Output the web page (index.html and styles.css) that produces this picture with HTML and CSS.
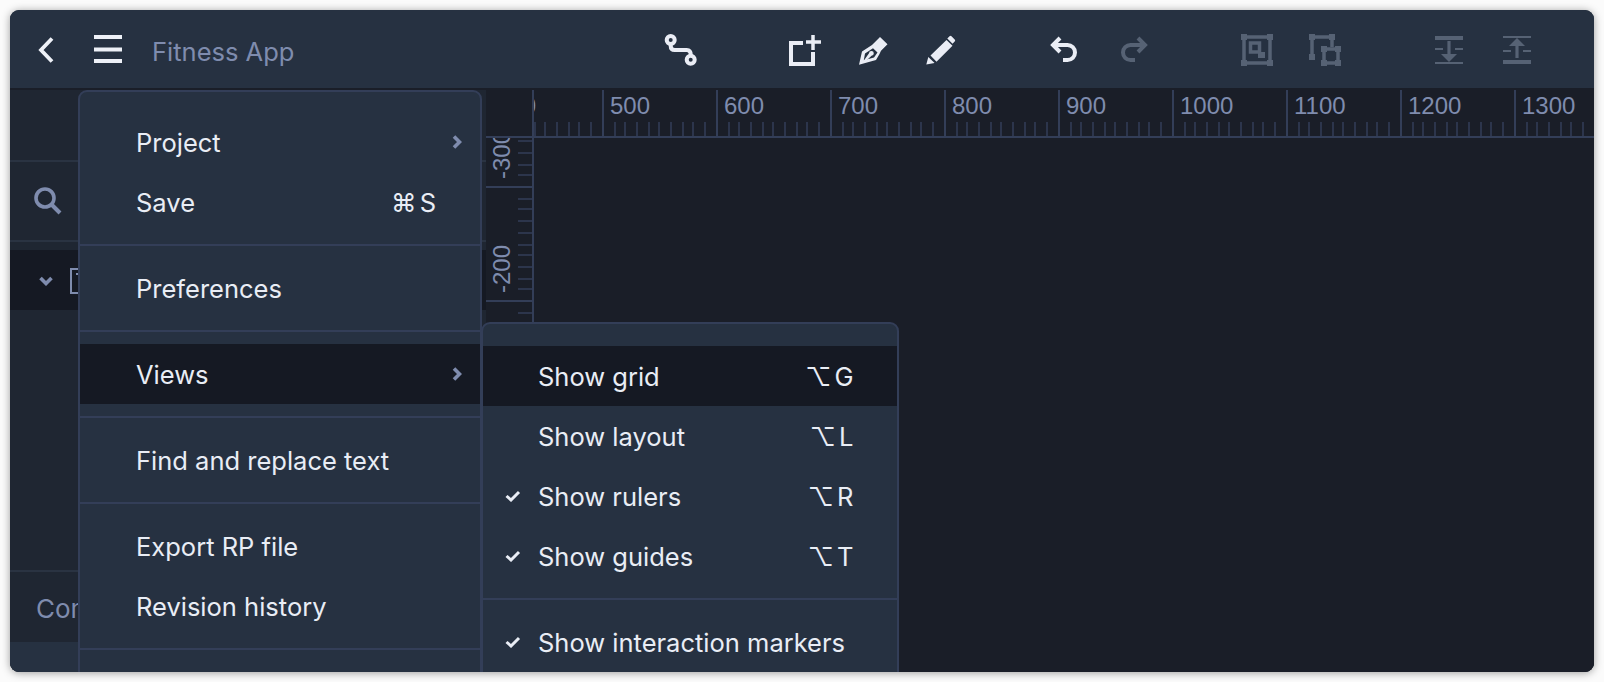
FILE: index.html
```html
<!DOCTYPE html>
<html lang="en">
<head>
<meta charset="utf-8">
<title>Fitness App</title>
<link rel="stylesheet" href="styles.css">
</head>
<body>
<svg class="defs" width="0" height="0" aria-hidden="true">
  <symbol id="ticks-h" viewBox="0 0 112 14"><path d="M11 0v14M21 0v14M33 0v14M45 0v14M55 0v14M67 0v14M79 0v14M89 0v14M101 0v14"/></symbol>
  <symbol id="ticks-v" viewBox="0 0 14 112"><path d="M0 11h14M0 21h14M0 33h14M0 45h14M0 57h14M0 67h14M0 79h14M0 91h14M0 101h14"/></symbol>
</svg>
<div class="window">
  <header class="header">
    <svg class="back" width="16" height="30" viewBox="0 0 16 30"><path d="M14 3.500 3 15l11 11.500"/></svg>
    <svg class="burger" width="28" height="30" viewBox="0 0 28 30"><path d="M0 2h28M0 14.500h28M0 26h28"/></svg>
    <span class="title">Fitness App</span>
    <div class="tools">
      <div class="tool-group">
        <span class="tool"><svg class="ico" width="36" height="36" viewBox="0 0 36 36"><circle cx="7.700" cy="8" r="4"/><circle cx="27.700" cy="27.700" r="4"/><path d="M7.700 12v2q0 4 4 4h12q4.200 0 4.200 5.500"/></svg></span>
      </div>
      <div class="tool-group">
        <span class="tool"><svg class="ico" width="36" height="36" viewBox="0 0 36 36"><path d="M16 11H4v21h22V20"/><path class="thin" d="M19 10h15M26 3v15"/></svg></span>
        <span class="tool"><svg class="ico" width="36" height="36" viewBox="0 0 36 36"><path class="solid" fill-rule="evenodd" d="M4 32.800 7 19.500 17 13l1.500-1.500L25 5l7.500 7.300L26 18.700 24.500 22 21 28ZM8.800 28.300 10 21.500l8-5.200 4.500 4.200-3.500 5Z"/><path class="solid" d="M7.500 30.500 14 21.300a2.400 2.400 0 1 1 2.500 2.500L9 30.800Z"/></svg></span>
        <span class="tool"><svg class="ico" width="36" height="36" viewBox="0 0 36 36"><path class="solid" d="M3.300 32.500 5.300 25l6.300 6ZM7.500 23.500 23.500 8l6 5.800-16 16ZM26.500 4.200q1-1 2 0l3.200 3.200q1 1 0 2l-2.200 2.400-5.200-5.200Z"/></svg></span>
      </div>
      <div class="tool-group">
        <span class="tool"><svg class="ico" width="36" height="36" viewBox="0 0 36 36"><path d="M13 6 6 13l7 7M7 13h13.500a7.500 7.500 0 0 1 0 15H16"/></svg></span>
        <span class="tool off"><svg class="ico" width="36" height="36" viewBox="0 0 36 36"><path d="m23 6 7 7-7 7M29 13H15.500a7.500 7.500 0 0 0 0 15H20"/></svg></span>
      </div>
      <div class="tool-group">
        <span class="tool off"><svg class="ico" width="36" height="36" viewBox="0 0 36 36"><path class="thin3" d="M5 5h26v26H5ZM11.500 11h9v9h-9Z"/><path class="solid" d="M2 2h6v6H2ZM28 2h6v6h-6ZM2 28h6v6H2ZM28 28h6v6h-6ZM19 20h7v6h-7Z"/></svg></span>
        <span class="tool off"><svg class="ico" width="36" height="36" viewBox="0 0 36 36"><path class="thin3" d="M5 25V5h20v10M17 17h14v14H17Z"/><path class="solid" d="M2 2h6v6H2ZM22 2h6v6h-6ZM2 22h6v6H2ZM14 14h6v6h-6ZM28 14h6v6h-6ZM14 28h6v6h-6ZM28 28h6v6h-6Z"/></svg></span>
      </div>
      <div class="tool-group">
        <span class="tool off"><svg class="ico" width="36" height="36" viewBox="0 0 36 36"><path class="solid" d="M4 4h28v4H4ZM4 16h8v2H4ZM24 16h8v2h-8ZM16.400 9h3.200v13H26l-8 8-8-8h6.400ZM4 30h28v2H4Z"/></svg></span>
        <span class="tool off"><svg class="ico" width="36" height="36" viewBox="0 0 36 36"><path class="solid" d="M4 4h28v2H4ZM18 6l8 8h-6.400v12h-3.200V14H10ZM4 18h8v2H4ZM24 18h8v2h-8ZM4 28h28v4H4Z"/></svg></span>
      </div>
    </div>
  </header>

  <div class="body">
    <aside class="sidebar">
      <div class="side-top"></div>
      <div class="side-search">
        <svg class="search" width="30" height="30" viewBox="0 0 30 30"><circle cx="12" cy="12" r="9"/><path d="m19 19 8 8"/></svg>
      </div>
      <div class="side-list">
        <div class="side-row">
          <svg class="caret" width="14" height="10" viewBox="0 0 14 10"><path d="m1.500 2 5.500 5.500L12.500 2"/></svg>
          <svg class="page-ico" width="26" height="26" viewBox="0 0 26 26"><path d="M1 1h24v24H1ZM6 6h8M10 6v6"/></svg>
        </div>
      </div>
      <div class="side-foot"><span class="foot-label">Components</span></div>
      <div class="side-strip"></div>
    </aside>

    <main class="stage">
      <div class="ruler-top">
        <div class="corner"></div>
        <div class="track">
          <div class="hcell"><span class="hlabel">400</span><svg class="hticks"><use href="#ticks-h"/></svg></div>
          <div class="hcell"><span class="hlabel">500</span><svg class="hticks"><use href="#ticks-h"/></svg></div>
          <div class="hcell"><span class="hlabel">600</span><svg class="hticks"><use href="#ticks-h"/></svg></div>
          <div class="hcell"><span class="hlabel">700</span><svg class="hticks"><use href="#ticks-h"/></svg></div>
          <div class="hcell"><span class="hlabel">800</span><svg class="hticks"><use href="#ticks-h"/></svg></div>
          <div class="hcell"><span class="hlabel">900</span><svg class="hticks"><use href="#ticks-h"/></svg></div>
          <div class="hcell"><span class="hlabel">1000</span><svg class="hticks"><use href="#ticks-h"/></svg></div>
          <div class="hcell"><span class="hlabel">1100</span><svg class="hticks"><use href="#ticks-h"/></svg></div>
          <div class="hcell"><span class="hlabel">1200</span><svg class="hticks"><use href="#ticks-h"/></svg></div>
          <div class="hcell"><span class="hlabel">1300</span><svg class="hticks"><use href="#ticks-h"/></svg></div>
        </div>
      </div>
      <div class="stage-main">
        <div class="ruler-left">
          <div class="vcell"><span class="vlabel">-300</span><svg class="vticks"><use href="#ticks-v"/></svg></div>
          <div class="vcell"><span class="vlabel">-200</span><svg class="vticks"><use href="#ticks-v"/></svg></div>
          <div class="vcell"><svg class="vticks"><use href="#ticks-v"/></svg></div>
        </div>
        <div class="canvas"></div>
      </div>
    </main>
  </div>

  <nav class="menu main-menu">
    <div class="section">
      <div class="item"><span class="label">Project</span><svg class="more" width="10" height="14" viewBox="0 0 10 14"><path d="m2 1.500 5.500 5.500L2 12.500"/></svg></div>
      <div class="item"><span class="label">Save</span><span class="key">⌘ S</span></div>
    </div>
    <div class="section">
      <div class="item"><span class="label">Preferences</span></div>
    </div>
    <div class="section">
      <div class="item active"><span class="label">Views</span><svg class="more" width="10" height="14" viewBox="0 0 10 14"><path d="m2 1.500 5.500 5.500L2 12.500"/></svg></div>
    </div>
    <div class="section">
      <div class="item"><span class="label">Find and replace text</span></div>
    </div>
    <div class="section">
      <div class="item"><span class="label">Export RP file</span></div>
      <div class="item"><span class="label">Revision history</span></div>
    </div>
    <div class="section"></div>
  </nav>

  <nav class="menu sub-menu">
    <div class="section">
      <div class="item active"><span class="check"></span><span class="label">Show grid</span><span class="key">⌥ G</span></div>
      <div class="item"><span class="check"></span><span class="label">Show layout</span><span class="key">⌥ L</span></div>
      <div class="item"><svg class="check" width="16" height="12" viewBox="0 0 16 12"><path d="m1.500 6 4.500 4 8-8"/></svg><span class="label">Show rulers</span><span class="key">⌥ R</span></div>
      <div class="item"><svg class="check" width="16" height="12" viewBox="0 0 16 12"><path d="m1.500 6 4.500 4 8-8"/></svg><span class="label">Show guides</span><span class="key">⌥ T</span></div>
    </div>
    <div class="section">
      <div class="item"><svg class="check" width="16" height="12" viewBox="0 0 16 12"><path d="m1.500 6 4.500 4 8-8"/></svg><span class="label">Show interaction markers</span></div>
    </div>
  </nav>
</div>
</body>
</html>
```
FILE: styles.css
```css
* { box-sizing: border-box; }
html, body { height: 100%; }
body {
  margin: 0;
  padding: 10px;
  background: #fbfbfb;
  font-family: Inter, "DejaVu Sans", sans-serif;
  overflow: hidden;
}
.defs { display: block; width: 0; height: 0; }

.window {
  position: relative;
  width: 1584px;
  height: 662px;
  border-radius: 9px;
  overflow: hidden;
  background: #263141;
  box-shadow: 0 1px 9px rgba(0, 0, 0, .38);
  display: flex;
  flex-direction: column;
}

/* header */
.header {
  height: 80px;
  flex: none;
  padding: 2px 43px 0 28px;
  display: flex;
  align-items: center;
  background: #263141;
  border-bottom: 2px solid #1a1e28;
}
.back path { fill: none; stroke: #eef1f7; stroke-width: 3.8; }
.burger { margin-left: 40px; }
.burger path { fill: none; stroke: #eef1f7; stroke-width: 4; }
.title {
  margin-left: 30px;
  padding-top: 3px;
  font-size: 25.500px;
  color: #7f8cae;
}
.tools { margin-left: auto; display: flex; gap: 56px; }
.tool-group { display: flex; }
.tool { width: 68px; display: flex; justify-content: center; color: #eaedf5; }
.tool.off { color: #566274; }
.ico { fill: none; stroke: currentColor; stroke-width: 4; display: block; }
.ico .thin { stroke-width: 3.500; }
.ico .thin3 { stroke-width: 3.500; }
.ico .solid { fill: currentColor; stroke: none; }

/* body */
.body { flex: 1; min-height: 0; display: flex; }

.sidebar {
  width: 476px;
  flex: none;
  display: flex;
  flex-direction: column;
  background: #1f2632;
}
.side-top { height: 72px; border-bottom: 2px solid #2a3342; flex: none; }
.side-search {
  height: 80px;
  flex: none;
  padding: 0 0 0 23px;
  display: flex;
  align-items: center;
  border-bottom: 2px solid #2a3342;
}
.search { fill: none; stroke: #7f8cae; stroke-width: 3.600; }
.search path { stroke-width: 4; }
.side-list { flex: 1; padding-top: 8px; }
.side-row {
  height: 60px;
  background: #151923;
  padding-left: 29px;
  padding-top: 2px;
  display: flex;
  align-items: center;
}
.caret { fill: none; stroke: #7f8cae; stroke-width: 3.600; }
.page-ico { margin-left: 17px; fill: none; stroke: #7f8cae; stroke-width: 2; }
.side-foot {
  height: 72px;
  flex: none;
  padding-left: 26px;
  display: flex;
  align-items: center;
  border-top: 2px solid #2a3342;
  background: #1f2632;
}
.foot-label {
  width: 42px;
  overflow: hidden;
  white-space: nowrap;
  padding-top: 2px;
  font-size: 26px;
  color: #7f8cae;
}
.side-strip { height: 30px; flex: none; background: #263141; }

/* stage + rulers */
.stage { flex: 1; min-width: 0; display: flex; flex-direction: column; background: #1a1e28; }
.ruler-top { height: 48px; flex: none; display: flex; border-bottom: 2px solid #333e58; }
.corner { width: 48px; flex: none; border-right: 2px solid #333e58; }
.track { flex: 1; min-width: 0; display: flex; overflow: hidden; }
.hcell {
  width: 114px;
  flex: none;
  display: grid;
  border-left: 2px solid #333e58;
}
.hcell:first-child { margin-left: -46px; }
.hlabel, .hticks { grid-area: 1 / 1; }
.hlabel {
  padding-left: 6px;
  margin-top: 2px;
  font: 24px/28px "Liberation Sans", Arial, sans-serif;
  color: #7f8cae;
}
.hticks {
  width: 112px;
  height: 14px;
  align-self: end;
  fill: none;
  stroke: #333e58;
  stroke-width: 1.500;
}
.stage-main { flex: 1; min-height: 0; display: flex; }
.ruler-left {
  width: 48px;
  flex: none;
  overflow: hidden;
  border-right: 2px solid #333e58;
}
.vcell {
  height: 114px;
  display: grid;
  border-top: 2px solid #333e58;
}
.vcell:first-child { margin-top: -66px; }
.vlabel, .vticks { grid-area: 1 / 1; }
.vlabel {
  justify-self: start;
  align-self: end;
  margin: 0 0 7px 2px;
  writing-mode: vertical-rl;
  transform: rotate(180deg);
  font: 24px/28px "Liberation Sans", Arial, sans-serif;
  color: #7f8cae;
}
.vticks {
  width: 14px;
  height: 112px;
  justify-self: end;
  fill: none;
  stroke: #333e58;
  stroke-width: 1.500;
}
.canvas { flex: 1; background: #1a1e28; }

/* menus */
.menu {
  position: absolute;
  background: #263141;
  border: 2px solid #333e58;
  border-radius: 9px 9px 0 0;
  color: #e9edf5;
  font-size: 25.500px;
}
.main-menu { left: 68px; top: 80px; width: 404px; height: 620px; padding-top: 8px; }
.sub-menu { left: 471px; top: 312px; width: 417.500px; height: 400px; padding-top: 10px; }
.section { padding: 12px 0; }
.section + .section { border-top: 2px solid #333e58; }
.item { height: 60px; display: flex; align-items: center; padding: 0 18px 0 56px; }
.item.active { background: #151923; }
.label { flex: 1; padding-top: 1px; }
.more { fill: none; stroke: #7f8cae; stroke-width: 3.600; flex: none; }
.key { padding: 1px 26px 0 0; word-spacing: -4px; }
.sub-menu .item { padding: 0 43px 0 22px; }
.sub-menu .key { padding-right: 0; }
.check {
  width: 16px;
  flex: none;
  margin-right: 17px;
  fill: none;
  stroke: #e9edf5;
  stroke-width: 3;
}
```
